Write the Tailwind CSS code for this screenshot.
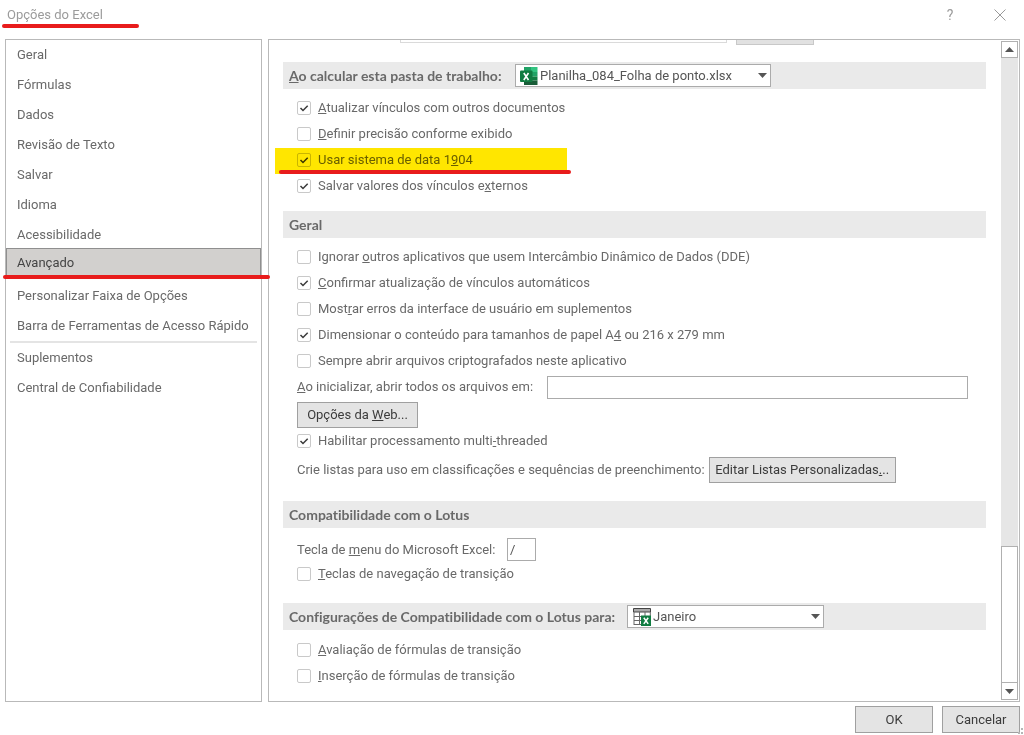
<!DOCTYPE html>
<html lang="pt-BR">
<head>
<meta charset="utf-8">
<meta name="viewport" content="width=device-width, initial-scale=1">
<title>Opções do Excel</title>
<script src="https://cdn.jsdelivr.net/npm/@tailwindcss/browser@4"></script>
</head>
<body class="flex h-screen flex-col overflow-hidden bg-white font-['Roboto','Noto_Sans',sans-serif] text-[13px] leading-5 text-[#696969]">
<svg class="hidden" aria-hidden="true">
  <symbol id="tick" viewBox="0 0 14 14"><path d="M3.5 7l2.5 2.5 4.700-4.700" fill="none" stroke="#3a3a3a" stroke-width="1.5"/></symbol>
  <symbol id="down" viewBox="0 0 9 5"><path d="M0 0h9L4.500 5z" fill="#555"/></symbol>
</svg>

<header class="flex h-[39px] shrink-0 items-start justify-between pl-[7px] pr-[18px] pt-[5px]">
  <h1 class="relative text-[#9b9b9b]">Opções do Excel
    <span class="absolute -left-[5px] top-[19px] h-1 w-[137px] rounded-full bg-[#e81c1c]"></span>
  </h1>
  <div class="flex gap-[38px] text-[#9b9b9b]">
    <button type="button" aria-label="Ajuda" class="h-5 w-3 text-[14px] leading-5">?</button>
    <button type="button" aria-label="Fechar" class="flex h-5 w-3 items-center justify-center">
      <svg class="h-3 w-3 shrink-0" viewBox="0 0 12 12"><path d="M.5.5l11 11M11.500.5l-11 11" stroke="#999" fill="none"/></svg>
    </button>
  </div>
</header>

<main class="flex min-h-0 flex-1 gap-1.5 pl-[5px] pr-1">
  <nav aria-label="Categorias" class="w-[257px] shrink-0 border border-[#b9b9b9]">
    <ul class="[&_a]:flex [&_a]:h-[30px] [&_a]:items-center [&_a]:pl-[11px] [&_a]:whitespace-nowrap">
      <li><a href="#">Geral</a></li>
      <li><a href="#">Fórmulas</a></li>
      <li><a href="#">Dados</a></li>
      <li><a href="#">Revisão de Texto</a></li>
      <li><a href="#">Salvar</a></li>
      <li><a href="#">Idioma</a></li>
      <li><a href="#">Acessibilidade</a></li>
      <li class="relative -mt-0.5 mb-0.5"><a href="#" aria-current="page" class="bg-[#d2d0ce] text-[#444] shadow-[inset_0_0_0_1px_#8f8f8f]">Avançado</a>
        <span class="absolute -left-[3px] top-[27px] z-10 h-1 w-[267px] rounded-full bg-[#e81c1c]"></span></li>
      <li class="mt-[3px]"><a href="#">Personalizar Faixa de Opções</a></li>
      <li><a href="#">Barra de Ferramentas de Acesso Rápido</a></li>
      <li class="mx-1 h-0.5 bg-[#e4e4e4]" role="separator"></li>
      <li><a href="#">Suplementos</a></li>
      <li><a href="#">Central de Confiabilidade</a></li>
    </ul>
  </nav>

  <div class="flex min-w-0 flex-1 border border-[#b9b9b9]">
    <form class="min-w-0 flex-1 overflow-hidden pl-3.5 pr-[15px]">
      <div class="flex h-[22px] items-start gap-[9px] pl-[117px]" aria-hidden="true">
        <div class="h-[3px] w-[327px] border border-t-0 border-[#dadada]"></div>
        <div class="h-[5px] w-[78px] border border-t-0 border-[#c8c8c8] bg-[#e1e1e1]"></div>
      </div>

      <section>
        <h2 class="flex h-[27px] items-center gap-2 bg-[#eaeaea] pl-1.5">
          <label for="wb" class="min-w-[218px] font-['Lato',sans-serif] text-[14px] font-bold [font-variant-ligatures:none]"><u>A</u>o calcular esta pasta de trabalho:</label>
          <span class="flex h-[23px] w-[256px] items-center border border-[#ababab] bg-white pl-1 pr-[3px] text-[#555]">
            <svg class="h-[18px] w-[18px] shrink-0" viewBox="0 0 18 18"><path d="M4 0h7v5H4z" fill="#21a366"/><path d="M11 0h6.500v5H11z" fill="#33c481"/><path d="M4 5h7v5H4z" fill="#107c41"/><path d="M11 5h6.500v4.500H11z" fill="#21a366"/><path d="M4 9.500h7V18H4z" fill="#185c37"/><path d="M11 9.500h6.500v4H11z" fill="#107c41"/><path d="M11 13.500h6.500V18H11z" fill="#185c37"/><rect y="3.500" width="12.500" height="11.500" rx="1" fill="#107c41"/><path d="M3.800 6l4.700 7M8.500 6l-4.700 7" stroke="#fff" stroke-width="1.600"/></svg>
            <select id="wb" class="h-5 min-w-0 flex-1 appearance-none bg-transparent pl-0.5"><option>Planilha_084_Folha de ponto.xlsx</option></select>
            <svg class="h-[5px] w-[9px] shrink-0"><use href="#down"/></svg>
          </span>
        </h2>
        <div class="mt-1.5 pl-3.5">
          <label class="flex h-[26px] items-center gap-[7px]"><span class="grid"><input type="checkbox" checked class="peer col-start-1 row-start-1 h-3.5 w-3.5 appearance-none rounded-[2px] border border-[#c9c9c9] bg-white"><svg class="pointer-events-none col-start-1 row-start-1 hidden h-3.5 w-3.5 peer-checked:block"><use href="#tick"/></svg></span><span><u>A</u>tualizar vínculos com outros documentos</span></label>
          <label class="flex h-[26px] items-center gap-[7px]"><span class="grid"><input type="checkbox" class="peer col-start-1 row-start-1 h-3.5 w-3.5 appearance-none rounded-[2px] border border-[#c9c9c9] bg-white"><svg class="pointer-events-none col-start-1 row-start-1 hidden h-3.5 w-3.5 peer-checked:block"><use href="#tick"/></svg></span><span><u>D</u>efinir precisão conforme exibido</span></label>
          <div class="relative">
            <label class="flex h-[26px] items-center gap-[7px]"><span class="grid"><input type="checkbox" checked class="peer col-start-1 row-start-1 h-3.5 w-3.5 appearance-none rounded-[2px] border border-[#c9c9c9] bg-white"><svg class="pointer-events-none col-start-1 row-start-1 hidden h-3.5 w-3.5 peer-checked:block"><use href="#tick"/></svg></span><span>Usar sistema de data 1<u>9</u>04</span></label>
            <span class="pointer-events-none absolute -left-[22px] top-px h-[26px] w-[292px] bg-[#ffe600] mix-blend-multiply"></span>
            <span class="pointer-events-none absolute -left-[18px] top-[23px] h-1 w-[292px] rounded-full bg-[#e81c1c]"></span>
          </div>
          <label class="flex h-[26px] items-center gap-[7px]"><span class="grid"><input type="checkbox" checked class="peer col-start-1 row-start-1 h-3.5 w-3.5 appearance-none rounded-[2px] border border-[#c9c9c9] bg-white"><svg class="pointer-events-none col-start-1 row-start-1 hidden h-3.5 w-3.5 peer-checked:block"><use href="#tick"/></svg></span><span>Salvar valores dos vínculos e<u>x</u>ternos</span></label>
        </div>
      </section>

      <section class="mt-3">
        <h2 class="flex h-[27px] items-center bg-[#eaeaea] pl-1.5 font-['Lato',sans-serif] text-[14px] font-bold [font-variant-ligatures:none]">Geral</h2>
        <div class="mt-1.5 pl-3.5">
          <label class="flex h-[26px] items-center gap-[7px]"><span class="grid"><input type="checkbox" class="peer col-start-1 row-start-1 h-3.5 w-3.5 appearance-none rounded-[2px] border border-[#c9c9c9] bg-white"><svg class="pointer-events-none col-start-1 row-start-1 hidden h-3.5 w-3.5 peer-checked:block"><use href="#tick"/></svg></span><span>Ignorar <u>o</u>utros aplicativos que usem Intercâmbio Dinâmico de Dados (DDE)</span></label>
          <label class="flex h-[26px] items-center gap-[7px]"><span class="grid"><input type="checkbox" checked class="peer col-start-1 row-start-1 h-3.5 w-3.5 appearance-none rounded-[2px] border border-[#c9c9c9] bg-white"><svg class="pointer-events-none col-start-1 row-start-1 hidden h-3.5 w-3.5 peer-checked:block"><use href="#tick"/></svg></span><span><u>C</u>onfirmar atualização de vínculos automáticos</span></label>
          <label class="flex h-[26px] items-center gap-[7px]"><span class="grid"><input type="checkbox" class="peer col-start-1 row-start-1 h-3.5 w-3.5 appearance-none rounded-[2px] border border-[#c9c9c9] bg-white"><svg class="pointer-events-none col-start-1 row-start-1 hidden h-3.5 w-3.5 peer-checked:block"><use href="#tick"/></svg></span><span>Most<u>r</u>ar erros da interface de usuário em suplementos</span></label>
          <label class="flex h-[26px] items-center gap-[7px]"><span class="grid"><input type="checkbox" checked class="peer col-start-1 row-start-1 h-3.5 w-3.5 appearance-none rounded-[2px] border border-[#c9c9c9] bg-white"><svg class="pointer-events-none col-start-1 row-start-1 hidden h-3.5 w-3.5 peer-checked:block"><use href="#tick"/></svg></span><span>Dimensionar o conteúdo para tamanhos de papel A<u>4</u> ou 216 x 279 mm</span></label>
          <label class="flex h-[26px] items-center gap-[7px]"><span class="grid"><input type="checkbox" class="peer col-start-1 row-start-1 h-3.5 w-3.5 appearance-none rounded-[2px] border border-[#c9c9c9] bg-white"><svg class="pointer-events-none col-start-1 row-start-1 hidden h-3.5 w-3.5 peer-checked:block"><use href="#tick"/></svg></span><span>Sempre abrir arquivos criptografados neste aplicativo</span></label>
          <div class="flex h-[26px] items-center gap-2 pr-[18px]">
            <label for="startup" class="min-w-[242px] whitespace-nowrap"><u>A</u>o inicializar, abrir todos os arquivos em:</label>
            <input id="startup" type="text" class="h-[23px] min-w-0 flex-1 border border-[#ababab] px-1">
          </div>
          <button type="button" class="mt-0.5 block h-[26px] w-[121px] border border-[#a0a0a0] bg-[#e4e4e4] text-[#3c3c3c]">Opções da <u>W</u>eb...</button>
          <label class="flex h-[26px] items-center gap-[7px]"><span class="grid"><input type="checkbox" checked class="peer col-start-1 row-start-1 h-3.5 w-3.5 appearance-none rounded-[2px] border border-[#c9c9c9] bg-white"><svg class="pointer-events-none col-start-1 row-start-1 hidden h-3.5 w-3.5 peer-checked:block"><use href="#tick"/></svg></span><span>Habilitar processamento multi<u>-</u>threaded</span></label>
          <div class="mt-[3px] flex items-center gap-1">
            <span>Crie listas para uso em classificações e sequências de preenchimento:</span>
            <button type="button" class="h-[26px] w-[187px] shrink-0 border border-[#a0a0a0] bg-[#e4e4e4] whitespace-nowrap text-[#3c3c3c]">Editar Listas Personalizadas<u>.</u>..</button>
          </div>
        </div>
      </section>

      <section class="mt-[18px]">
        <h2 class="flex h-[27px] items-center bg-[#eaeaea] pl-1.5 font-['Lato',sans-serif] text-[14px] font-bold [font-variant-ligatures:none]">Compatibilidade com o Lotus</h2>
        <div class="mt-2.5 pl-3.5">
          <div class="flex items-center gap-2">
            <label for="key" class="min-w-[202px]">Tecla de <u>m</u>enu do Microsoft Excel:</label>
            <input id="key" type="text" value="/" class="h-[23px] w-[29px] border border-[#ababab] px-0.5 text-[#555]">
          </div>
          <label class="flex h-[26px] items-center gap-[7px]"><span class="grid"><input type="checkbox" class="peer col-start-1 row-start-1 h-3.5 w-3.5 appearance-none rounded-[2px] border border-[#c9c9c9] bg-white"><svg class="pointer-events-none col-start-1 row-start-1 hidden h-3.5 w-3.5 peer-checked:block"><use href="#tick"/></svg></span><span><u>T</u>eclas de navegação de transição</span></label>
        </div>
      </section>

      <section class="mt-4">
        <h2 class="flex h-[27px] items-center gap-2 bg-[#eaeaea] pl-1.5">
          <label for="sheet" class="min-w-[330px] font-['Lato',sans-serif] text-[14px] font-bold [font-variant-ligatures:none]">Configurações de Compatibilidade com o Lotus para:</label>
          <span class="flex h-[23px] w-[197px] items-center border border-[#ababab] bg-white pl-[5px] pr-[3px] text-[#555]">
            <svg class="h-[18px] w-[18px] shrink-0" viewBox="0 0 18 18" fill="none"><path d="M.5.5h17v3.500H.5z" fill="#aaa" stroke="#444"/><path d="M1 4v13M6.500 4v13M12 4v4M17.300 4v4M1 8.500h8M1 12.500h8M1 16.500h8" stroke="#666"/><rect x="8" y="7.500" width="10" height="10.500" fill="#107c41"/><path d="M10.800 9.700l4.400 6.200M15.200 9.700l-4.400 6.200" stroke="#fff" stroke-width="1.500"/></svg>
            <select id="sheet" class="h-5 min-w-0 flex-1 appearance-none bg-transparent pl-0.5"><option>Janeiro</option></select>
            <svg class="h-[5px] w-[9px] shrink-0"><use href="#down"/></svg>
          </span>
        </h2>
        <div class="mt-[7px] pl-3.5">
          <label class="flex h-[26px] items-center gap-[7px]"><span class="grid"><input type="checkbox" class="peer col-start-1 row-start-1 h-3.5 w-3.5 appearance-none rounded-[2px] border border-[#c9c9c9] bg-white"><svg class="pointer-events-none col-start-1 row-start-1 hidden h-3.5 w-3.5 peer-checked:block"><use href="#tick"/></svg></span><span><u>A</u>valiação de fórmulas de transição</span></label>
          <label class="flex h-[26px] items-center gap-[7px]"><span class="grid"><input type="checkbox" class="peer col-start-1 row-start-1 h-3.5 w-3.5 appearance-none rounded-[2px] border border-[#c9c9c9] bg-white"><svg class="pointer-events-none col-start-1 row-start-1 hidden h-3.5 w-3.5 peer-checked:block"><use href="#tick"/></svg></span><span><u>I</u>nserção de fórmulas de transição</span></label>
        </div>
      </section>
    </form>

    <div class="my-px mr-px flex w-[17px] shrink-0 flex-col bg-[#e6e6e6]">
      <button type="button" aria-label="Rolar para cima" class="flex h-[17px] items-center justify-center border border-[#b0b0b0] bg-white"><svg class="h-[5px] w-[9px] rotate-180"><use href="#down"/></svg></button>
      <div class="grow-[490] basis-0"></div>
      <div class="grow-[136] basis-0 border border-[#b0b0b0] bg-white"></div>
      <button type="button" aria-label="Rolar para baixo" class="flex h-[17px] items-center justify-center border border-t-0 border-[#b0b0b0] bg-white"><svg class="h-[5px] w-[9px]"><use href="#down"/></svg></button>
    </div>
  </div>
</main>

<footer class="flex h-[33px] shrink-0 items-start justify-end gap-[9px] pr-1 pt-1">
  <button type="button" class="h-[27px] w-[78px] border border-[#a0a0a0] bg-[#e4e4e4] text-[#3c3c3c]">OK</button>
  <button type="button" class="h-[27px] w-[78px] border border-[#a0a0a0] bg-[#e4e4e4] text-[#3c3c3c]">Cancelar</button>
  <svg class="absolute bottom-0 right-0 h-[7px] w-[6px]" viewBox="0 0 6 7" fill="#b5b5b5" aria-hidden="true"><path d="M3 0h2v2H3zM0 4h2v2H0zM3 4h2v2H3z"/></svg>
</footer>
</body>
</html>
